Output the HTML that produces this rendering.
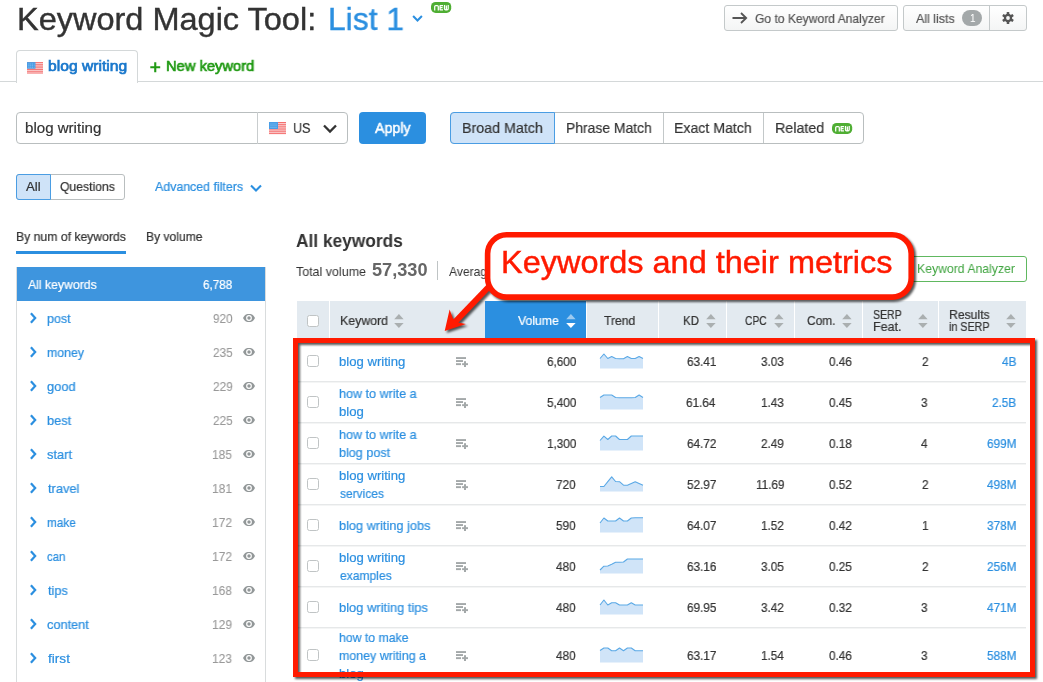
<!DOCTYPE html>
<html><head><meta charset="utf-8"><title>Keyword Magic Tool</title>
<style>
html,body{margin:0;padding:0;background:#fff;}
body{width:1043px;height:682px;position:relative;overflow:hidden;font-family:"Liberation Sans",sans-serif;}
.t{position:absolute;white-space:nowrap;line-height:1;transform-origin:0 50%;will-change:transform;}
.b{position:absolute;box-sizing:border-box;}
svg{position:absolute;overflow:visible;}
</style></head><body>
<span class="t" style="top:2.91px;font-size:32px;color:#333;-webkit-text-stroke:0.4px #333;left:16.50px;transform:scaleX(1.0153);">Keyword Magic Tool:</span>
<span class="t" style="top:2.91px;font-size:32px;color:#2b8fe0;-webkit-text-stroke:0.4px #2b8fe0;left:327.96px;transform:scaleX(0.9928);">List 1</span>
<svg style="left:412px;top:13px" width="12" height="10" viewBox="0 0 12 10"><path d="M1.1 3 L5.5 7.5 L9.9 3" fill="none" stroke="#2b8fe0" stroke-width="2"/></svg>
<svg style="left:431px;top:2px" width="21" height="11" viewBox="0 0 21 11"><rect x="0" y="0" width="20.2" height="10.9" rx="4.6" fill="#4fae33"/><g fill="none" stroke="#fff" stroke-width="1.25" stroke-linejoin="round" transform="translate(-0.4 0)"><path d="M4.1 8.4 V4.6 Q4.1 3.5 5.2 3.5 H6.6 Q7.7 3.5 7.7 4.6 V8.4"/><path d="M12.4 3.5 H9.5 V7.8 H12.4 M9.5 5.65 H12"/><path d="M13.9 2.9 V6.7 Q13.9 7.8 15 7.8 H16.5 Q17.6 7.8 17.6 6.7 V2.9 M15.75 3.5 V7.8"/></g></svg>
<div class="b" style="left:724px;top:5px;width:174px;height:26px;border:1px solid #c4c9ca;border-radius:3px;background:linear-gradient(#fff,#f4f5f5);"></div>
<svg style="left:732px;top:12px" width="16" height="12" viewBox="0 0 16 12"><path d="M0.5 6 H14 M9 1 L14.2 6 L9 11" fill="none" stroke="#555" stroke-width="1.8"/></svg>
<span class="t" style="top:11.50px;font-size:13px;color:#555;-webkit-text-stroke:0.2px #555;left:754.90px;transform:scaleX(0.9294);">Go to Keyword Analyzer</span>
<div class="b" style="left:903px;top:5px;width:124px;height:26px;border:1px solid #c4c9ca;border-radius:3px;background:linear-gradient(#fff,#f4f5f5);"></div>
<div class="b" style="left:989px;top:5px;width:1px;height:26px;background:#c4c9ca;"></div>
<span class="t" style="top:11.50px;font-size:13px;color:#555;-webkit-text-stroke:0.2px #555;left:915.70px;transform:scaleX(0.9565);">All lists</span>
<div class="b" style="left:962px;top:10px;width:20px;height:16px;background:#a3a8a9;border-radius:8px;"></div>
<span class="t" style="top:13.84px;font-size:10px;color:#fff;left:970.10px;">1</span>
<svg style="left:1002px;top:12px" width="12" height="12" viewBox="-6 -6 12 12"><g fill="#555"><rect x="-1.3" y="-6" width="2.6" height="12" rx=".6" transform="rotate(0)"/><rect x="-1.3" y="-6" width="2.6" height="12" rx=".6" transform="rotate(60)"/><rect x="-1.3" y="-6" width="2.6" height="12" rx=".6" transform="rotate(120)"/><circle r="4.2"/></g><circle r="1.9" fill="#f6f7f7"/></svg>
<div class="b" style="left:0px;top:81px;width:1043px;height:1px;background:#d4d8d9;"></div>
<div class="b" style="left:16px;top:50px;width:122px;height:33px;border:1px solid #d4d8d9;border-bottom:none;border-radius:4px 4px 0 0;background:#fff;"></div>
<svg style="left:27px;top:61.5px" width="16" height="11.5" viewBox="0 0 17 12"><rect width="17" height="12" fill="#fbdcdc"/><rect y="0.00" width="17" height="1" fill="#f46f6f"/><rect y="1.85" width="17" height="1" fill="#f46f6f"/><rect y="3.70" width="17" height="1" fill="#f46f6f"/><rect y="5.55" width="17" height="1" fill="#f46f6f"/><rect y="7.40" width="17" height="1" fill="#f46f6f"/><rect y="9.25" width="17" height="1" fill="#f46f6f"/><rect y="11.10" width="17" height="1" fill="#f46f6f"/><rect width="9" height="7" fill="#4a9ee6"/><path d="M1.5 2 H8 M1.5 3.8 H8 M1.5 5.5 H8" stroke="#9ccbf2" stroke-width="0.8" stroke-dasharray="1 1"/></svg>
<span class="t" style="top:58.10px;font-size:15px;color:#1a78cc;-webkit-text-stroke:0.7px #1a78cc;left:48.26px;transform:scaleX(1.0432);">blog writing</span>
<svg style="left:150px;top:62px" width="11" height="11" viewBox="0 0 11 11"><path d="M0.3 5.3 H10.2 M5.25 0.3 V10.2" stroke="#219a14" stroke-width="2.1" fill="none"/></svg>
<span class="t" style="top:58.10px;font-size:15px;color:#219a14;-webkit-text-stroke:0.7px #219a14;left:165.82px;transform:scaleX(0.9801);">New keyword</span>
<div class="b" style="left:16px;top:112px;width:332px;height:32px;border:1px solid #b9bebf;border-radius:4px;background:#fff;"></div>
<div class="b" style="left:257px;top:112px;width:1px;height:32px;background:#c9cdce;"></div>
<span class="t" style="top:120.30px;font-size:15px;color:#333;-webkit-text-stroke:0.2px #333;left:25.40px;transform:scaleX(1.0054);">blog writing</span>
<svg style="left:269px;top:122px" width="17" height="12" viewBox="0 0 17 12"><rect width="17" height="12" fill="#fbdcdc"/><rect y="0.00" width="17" height="1" fill="#f46f6f"/><rect y="1.85" width="17" height="1" fill="#f46f6f"/><rect y="3.70" width="17" height="1" fill="#f46f6f"/><rect y="5.55" width="17" height="1" fill="#f46f6f"/><rect y="7.40" width="17" height="1" fill="#f46f6f"/><rect y="9.25" width="17" height="1" fill="#f46f6f"/><rect y="11.10" width="17" height="1" fill="#f46f6f"/><rect width="9" height="7" fill="#4a9ee6"/><path d="M1.5 2 H8 M1.5 3.8 H8 M1.5 5.5 H8" stroke="#9ccbf2" stroke-width="0.8" stroke-dasharray="1 1"/></svg>
<span class="t" style="top:120.10px;font-size:15px;color:#333;-webkit-text-stroke:0.2px #333;left:292.92px;transform:scaleX(0.8385);">US</span>
<svg style="left:322px;top:123px" width="16" height="12" viewBox="0 0 16 12"><path d="M2 2.5 L8 8.5 L14 2.5" fill="none" stroke="#333" stroke-width="2.3"/></svg>
<div class="b" style="left:359.4px;top:112px;width:66.9px;height:32px;background:#2b8fe0;border-radius:4px;"></div>
<span class="t" style="top:120.30px;font-size:15px;color:#fff;-webkit-text-stroke:0.5px #fff;left:375.20px;transform:scaleX(0.9493);">Apply</span>
<div class="b" style="left:450px;top:112px;width:414px;height:32px;border:1px solid #b9bebf;border-radius:4px;background:#fff;"></div>
<div class="b" style="left:450px;top:112px;width:104.8px;height:32px;border:1px solid #4a9de3;border-radius:4px 0 0 4px;background:#cfe3f8;"></div>
<div class="b" style="left:663px;top:113px;width:1px;height:30px;background:#c3c8c9;"></div>
<div class="b" style="left:763px;top:113px;width:1px;height:30px;background:#c3c8c9;"></div>
<span class="t" style="top:120.30px;font-size:15px;color:#333;-webkit-text-stroke:0.2px #333;left:461.86px;transform:scaleX(0.9500);">Broad Match</span>
<span class="t" style="top:120.30px;font-size:15px;color:#333;-webkit-text-stroke:0.2px #333;left:565.89px;transform:scaleX(0.9265);">Phrase Match</span>
<span class="t" style="top:120.30px;font-size:15px;color:#333;-webkit-text-stroke:0.2px #333;left:674.37px;transform:scaleX(0.9410);">Exact Match</span>
<span class="t" style="top:120.30px;font-size:15px;color:#333;-webkit-text-stroke:0.2px #333;left:774.86px;transform:scaleX(0.9527);">Related</span>
<svg style="left:832px;top:123px" width="21" height="11" viewBox="0 0 21 11"><rect x="0" y="0" width="20.2" height="10.9" rx="4.6" fill="#4fae33"/><g fill="none" stroke="#fff" stroke-width="1.25" stroke-linejoin="round" transform="translate(-0.4 0)"><path d="M4.1 8.4 V4.6 Q4.1 3.5 5.2 3.5 H6.6 Q7.7 3.5 7.7 4.6 V8.4"/><path d="M12.4 3.5 H9.5 V7.8 H12.4 M9.5 5.65 H12"/><path d="M13.9 2.9 V6.7 Q13.9 7.8 15 7.8 H16.5 Q17.6 7.8 17.6 6.7 V2.9 M15.75 3.5 V7.8"/></g></svg>
<div class="b" style="left:16px;top:174px;width:109.2px;height:26px;border:1px solid #b9bebf;border-radius:3px;background:#fff;"></div>
<div class="b" style="left:16px;top:174px;width:35px;height:26px;border:1px solid #4a9de3;border-radius:3px 0 0 3px;background:#cfe3f8;"></div>
<span class="t" style="top:180.00px;font-size:13px;color:#333;-webkit-text-stroke:0.22px #333;left:26.10px;transform:scaleX(1.0110);">All</span>
<span class="t" style="top:180.00px;font-size:13px;color:#333;-webkit-text-stroke:0.22px #333;left:60.11px;transform:scaleX(0.9377);">Questions</span>
<span class="t" style="top:180.00px;font-size:13px;color:#2b8fe0;-webkit-text-stroke:0.22px #2b8fe0;left:154.80px;transform:scaleX(0.9518);">Advanced filters</span>
<svg style="left:249px;top:183px" width="14" height="10" viewBox="0 0 14 10"><path d="M2 2.5 L7 7.5 L12 2.5" fill="none" stroke="#2b8fe0" stroke-width="2.1"/></svg>
<span class="t" style="top:230.30px;font-size:13px;color:#333;-webkit-text-stroke:0.22px #333;left:16.02px;transform:scaleX(0.9388);">By num of keywords</span>
<span class="t" style="top:230.30px;font-size:13px;color:#333;-webkit-text-stroke:0.22px #333;left:146.03px;transform:scaleX(0.9298);">By volume</span>
<div class="b" style="left:16px;top:250.5px;width:110px;height:3.5px;background:#2b8fe0;"></div>
<div class="b" style="left:16px;top:267px;width:249.7px;height:420px;border:1px solid #d9dcdd;background:#fff;"></div>
<div class="b" style="left:17px;top:267px;width:248px;height:34px;background:#3e95de;"></div>
<span class="t" style="top:278.00px;font-size:13px;color:#fff;-webkit-text-stroke:0.22px #fff;left:27.80px;transform:scaleX(0.9415);">All keywords</span>
<span class="t" style="top:278.00px;font-size:13px;color:#fff;-webkit-text-stroke:0.22px #fff;left:203.42px;transform:scaleX(0.8996);">6,788</span>
<svg style="left:29.2px;top:311.7px" width="10" height="12" viewBox="0 0 10 12"><path d="M1.9 1.2 L6.2 6 L1.9 10.8" fill="none" stroke="#2b8fe0" stroke-width="2.2"/></svg>
<span class="t" style="top:311.65px;font-size:13px;color:#2b8fe0;-webkit-text-stroke:0.22px #2b8fe0;left:46.95px;transform:scaleX(0.9584);">post</span>
<span class="t" style="top:311.70px;font-size:13px;color:#999;-webkit-text-stroke:0.1px #999;left:212.83px;transform:scaleX(0.8999);">920</span>
<svg style="left:243px;top:314.2px" width="12" height="8" viewBox="0 0 12 8"><path d="M0 4 C2 0.3 4 0 6 0 C8 0 10 0.3 12 4 C10 7.7 8 8 6 8 C4 8 2 7.7 0 4 Z" fill="#929798"/><circle cx="6" cy="4" r="2.9" fill="#fff"/><circle cx="6" cy="4" r="1.7" fill="#929798"/></svg>
<svg style="left:29.2px;top:345.7px" width="10" height="12" viewBox="0 0 10 12"><path d="M1.9 1.2 L6.2 6 L1.9 10.8" fill="none" stroke="#2b8fe0" stroke-width="2.2"/></svg>
<span class="t" style="top:345.65px;font-size:13px;color:#2b8fe0;-webkit-text-stroke:0.22px #2b8fe0;left:46.96px;transform:scaleX(0.9498);">money</span>
<span class="t" style="top:345.70px;font-size:13px;color:#999;-webkit-text-stroke:0.1px #999;left:212.71px;transform:scaleX(0.9056);">235</span>
<svg style="left:243px;top:348.2px" width="12" height="8" viewBox="0 0 12 8"><path d="M0 4 C2 0.3 4 0 6 0 C8 0 10 0.3 12 4 C10 7.7 8 8 6 8 C4 8 2 7.7 0 4 Z" fill="#929798"/><circle cx="6" cy="4" r="2.9" fill="#fff"/><circle cx="6" cy="4" r="1.7" fill="#929798"/></svg>
<svg style="left:29.2px;top:379.7px" width="10" height="12" viewBox="0 0 10 12"><path d="M1.9 1.2 L6.2 6 L1.9 10.8" fill="none" stroke="#2b8fe0" stroke-width="2.2"/></svg>
<span class="t" style="top:379.65px;font-size:13px;color:#2b8fe0;-webkit-text-stroke:0.22px #2b8fe0;left:47.19px;transform:scaleX(0.9859);">good</span>
<span class="t" style="top:379.70px;font-size:13px;color:#999;-webkit-text-stroke:0.1px #999;left:212.71px;transform:scaleX(0.9113);">229</span>
<svg style="left:243px;top:382.2px" width="12" height="8" viewBox="0 0 12 8"><path d="M0 4 C2 0.3 4 0 6 0 C8 0 10 0.3 12 4 C10 7.7 8 8 6 8 C4 8 2 7.7 0 4 Z" fill="#929798"/><circle cx="6" cy="4" r="2.9" fill="#fff"/><circle cx="6" cy="4" r="1.7" fill="#929798"/></svg>
<svg style="left:29.2px;top:413.7px" width="10" height="12" viewBox="0 0 10 12"><path d="M1.9 1.2 L6.2 6 L1.9 10.8" fill="none" stroke="#2b8fe0" stroke-width="2.2"/></svg>
<span class="t" style="top:413.65px;font-size:13px;color:#2b8fe0;-webkit-text-stroke:0.22px #2b8fe0;left:46.94px;transform:scaleX(0.9794);">best</span>
<span class="t" style="top:413.70px;font-size:13px;color:#999;-webkit-text-stroke:0.1px #999;left:212.71px;transform:scaleX(0.9056);">225</span>
<svg style="left:243px;top:416.2px" width="12" height="8" viewBox="0 0 12 8"><path d="M0 4 C2 0.3 4 0 6 0 C8 0 10 0.3 12 4 C10 7.7 8 8 6 8 C4 8 2 7.7 0 4 Z" fill="#929798"/><circle cx="6" cy="4" r="2.9" fill="#fff"/><circle cx="6" cy="4" r="1.7" fill="#929798"/></svg>
<svg style="left:29.2px;top:447.7px" width="10" height="12" viewBox="0 0 10 12"><path d="M1.9 1.2 L6.2 6 L1.9 10.8" fill="none" stroke="#2b8fe0" stroke-width="2.2"/></svg>
<span class="t" style="top:447.65px;font-size:13px;color:#2b8fe0;-webkit-text-stroke:0.22px #2b8fe0;left:47.44px;transform:scaleX(0.9884);">start</span>
<span class="t" style="top:447.70px;font-size:13px;color:#999;-webkit-text-stroke:0.1px #999;left:212.47px;transform:scaleX(0.9172);">185</span>
<svg style="left:243px;top:450.2px" width="12" height="8" viewBox="0 0 12 8"><path d="M0 4 C2 0.3 4 0 6 0 C8 0 10 0.3 12 4 C10 7.7 8 8 6 8 C4 8 2 7.7 0 4 Z" fill="#929798"/><circle cx="6" cy="4" r="2.9" fill="#fff"/><circle cx="6" cy="4" r="1.7" fill="#929798"/></svg>
<svg style="left:29.2px;top:481.7px" width="10" height="12" viewBox="0 0 10 12"><path d="M1.9 1.2 L6.2 6 L1.9 10.8" fill="none" stroke="#2b8fe0" stroke-width="2.2"/></svg>
<span class="t" style="top:481.65px;font-size:13px;color:#2b8fe0;-webkit-text-stroke:0.22px #2b8fe0;left:47.57px;transform:scaleX(0.9834);">travel</span>
<span class="t" style="top:481.70px;font-size:13px;color:#999;-webkit-text-stroke:0.1px #999;left:212.46px;transform:scaleX(0.9231);">181</span>
<svg style="left:243px;top:484.2px" width="12" height="8" viewBox="0 0 12 8"><path d="M0 4 C2 0.3 4 0 6 0 C8 0 10 0.3 12 4 C10 7.7 8 8 6 8 C4 8 2 7.7 0 4 Z" fill="#929798"/><circle cx="6" cy="4" r="2.9" fill="#fff"/><circle cx="6" cy="4" r="1.7" fill="#929798"/></svg>
<svg style="left:29.2px;top:515.7px" width="10" height="12" viewBox="0 0 10 12"><path d="M1.9 1.2 L6.2 6 L1.9 10.8" fill="none" stroke="#2b8fe0" stroke-width="2.2"/></svg>
<span class="t" style="top:515.65px;font-size:13px;color:#2b8fe0;-webkit-text-stroke:0.22px #2b8fe0;left:46.99px;transform:scaleX(0.9100);">make</span>
<span class="t" style="top:515.70px;font-size:13px;color:#999;-webkit-text-stroke:0.1px #999;left:212.46px;transform:scaleX(0.9231);">172</span>
<svg style="left:243px;top:518.2px" width="12" height="8" viewBox="0 0 12 8"><path d="M0 4 C2 0.3 4 0 6 0 C8 0 10 0.3 12 4 C10 7.7 8 8 6 8 C4 8 2 7.7 0 4 Z" fill="#929798"/><circle cx="6" cy="4" r="2.9" fill="#fff"/><circle cx="6" cy="4" r="1.7" fill="#929798"/></svg>
<svg style="left:29.2px;top:549.7px" width="10" height="12" viewBox="0 0 10 12"><path d="M1.9 1.2 L6.2 6 L1.9 10.8" fill="none" stroke="#2b8fe0" stroke-width="2.2"/></svg>
<span class="t" style="top:549.65px;font-size:13px;color:#2b8fe0;-webkit-text-stroke:0.22px #2b8fe0;left:47.24px;transform:scaleX(0.8755);">can</span>
<span class="t" style="top:549.70px;font-size:13px;color:#999;-webkit-text-stroke:0.1px #999;left:212.46px;transform:scaleX(0.9231);">172</span>
<svg style="left:243px;top:552.2px" width="12" height="8" viewBox="0 0 12 8"><path d="M0 4 C2 0.3 4 0 6 0 C8 0 10 0.3 12 4 C10 7.7 8 8 6 8 C4 8 2 7.7 0 4 Z" fill="#929798"/><circle cx="6" cy="4" r="2.9" fill="#fff"/><circle cx="6" cy="4" r="1.7" fill="#929798"/></svg>
<svg style="left:29.2px;top:583.7px" width="10" height="12" viewBox="0 0 10 12"><path d="M1.9 1.2 L6.2 6 L1.9 10.8" fill="none" stroke="#2b8fe0" stroke-width="2.2"/></svg>
<span class="t" style="top:583.65px;font-size:13px;color:#2b8fe0;-webkit-text-stroke:0.22px #2b8fe0;left:47.57px;transform:scaleX(0.9767);">tips</span>
<span class="t" style="top:583.70px;font-size:13px;color:#999;-webkit-text-stroke:0.1px #999;left:212.47px;transform:scaleX(0.9172);">168</span>
<svg style="left:243px;top:586.2px" width="12" height="8" viewBox="0 0 12 8"><path d="M0 4 C2 0.3 4 0 6 0 C8 0 10 0.3 12 4 C10 7.7 8 8 6 8 C4 8 2 7.7 0 4 Z" fill="#929798"/><circle cx="6" cy="4" r="2.9" fill="#fff"/><circle cx="6" cy="4" r="1.7" fill="#929798"/></svg>
<svg style="left:29.2px;top:617.7px" width="10" height="12" viewBox="0 0 10 12"><path d="M1.9 1.2 L6.2 6 L1.9 10.8" fill="none" stroke="#2b8fe0" stroke-width="2.2"/></svg>
<span class="t" style="top:617.65px;font-size:13px;color:#2b8fe0;-webkit-text-stroke:0.22px #2b8fe0;left:47.19px;transform:scaleX(0.9805);">content</span>
<span class="t" style="top:617.70px;font-size:13px;color:#999;-webkit-text-stroke:0.1px #999;left:212.46px;transform:scaleX(0.9231);">129</span>
<svg style="left:243px;top:620.2px" width="12" height="8" viewBox="0 0 12 8"><path d="M0 4 C2 0.3 4 0 6 0 C8 0 10 0.3 12 4 C10 7.7 8 8 6 8 C4 8 2 7.7 0 4 Z" fill="#929798"/><circle cx="6" cy="4" r="2.9" fill="#fff"/><circle cx="6" cy="4" r="1.7" fill="#929798"/></svg>
<svg style="left:29.2px;top:651.7px" width="10" height="12" viewBox="0 0 10 12"><path d="M1.9 1.2 L6.2 6 L1.9 10.8" fill="none" stroke="#2b8fe0" stroke-width="2.2"/></svg>
<span class="t" style="top:651.65px;font-size:13px;color:#2b8fe0;-webkit-text-stroke:0.22px #2b8fe0;left:47.56px;transform:scaleX(1.0481);">first</span>
<span class="t" style="top:651.70px;font-size:13px;color:#999;-webkit-text-stroke:0.1px #999;left:212.47px;transform:scaleX(0.9172);">123</span>
<svg style="left:243px;top:654.2px" width="12" height="8" viewBox="0 0 12 8"><path d="M0 4 C2 0.3 4 0 6 0 C8 0 10 0.3 12 4 C10 7.7 8 8 6 8 C4 8 2 7.7 0 4 Z" fill="#929798"/><circle cx="6" cy="4" r="2.9" fill="#fff"/><circle cx="6" cy="4" r="1.7" fill="#929798"/></svg>
<span class="t" style="top:231.76px;font-size:18px;color:#333;font-weight:bold;left:296.15px;transform:scaleX(0.9620);">All keywords</span>
<span class="t" style="top:265.00px;font-size:13px;color:#333;left:296.25px;transform:scaleX(0.9588);">Total volume</span>
<span class="t" style="top:261.06px;font-size:18px;color:#666;font-weight:bold;left:371.96px;transform:scaleX(1.0089);">57,330</span>
<div class="b" style="left:437px;top:261px;width:1px;height:19px;background:#bfc4c5;"></div>
<span class="t" style="top:265.00px;font-size:13px;color:#333;left:448.50px;transform:scaleX(0.9285);">Average</span>
<div class="b" style="left:880px;top:256px;width:147px;height:26px;border:1px solid #60b860;border-radius:3px;background:#fff;"></div>
<span class="t" style="top:262.00px;font-size:13px;color:#3fa43f;left:916.52px;transform:scaleX(0.9414);">Keyword Analyzer</span>
<div class="b" style="left:297px;top:301px;width:729px;height:38px;background:#e3eaf0;"></div>
<div class="b" style="left:485px;top:301px;width:101.5px;height:38px;background:#2b8fe0;"></div>
<div class="b" style="left:329px;top:301px;width:1px;height:38px;background:#fff;"></div>
<div class="b" style="left:586px;top:301px;width:1px;height:38px;background:#fff;"></div>
<div class="b" style="left:658px;top:301px;width:1px;height:38px;background:#fff;"></div>
<div class="b" style="left:726px;top:301px;width:1px;height:38px;background:#fff;"></div>
<div class="b" style="left:794px;top:301px;width:1px;height:38px;background:#fff;"></div>
<div class="b" style="left:862px;top:301px;width:1px;height:38px;background:#fff;"></div>
<div class="b" style="left:938px;top:301px;width:1px;height:38px;background:#fff;"></div>
<div class="b" style="left:307px;top:315px;width:12px;height:12px;border:1px solid #c0c4c5;border-radius:2.5px;background:#fff;"></div>
<span class="t" style="top:314.00px;font-size:13px;color:#333;-webkit-text-stroke:0.22px #333;left:339.51px;transform:scaleX(0.9497);">Keyword</span>
<svg style="left:394px;top:314px" width="10" height="14" viewBox="0 0 10 14"><path d="M0.2 5.2 L4.9 0 L9.6 5.2 Z" fill="#aaafb0"/><path d="M0.2 8.9 L4.9 14.1 L9.6 8.9 Z" fill="#aaafb0"/></svg>
<span class="t" style="top:314.00px;font-size:13px;color:#fff;-webkit-text-stroke:0.22px #fff;left:517.70px;transform:scaleX(0.9394);">Volume</span>
<svg style="left:566px;top:314px" width="10" height="14" viewBox="0 0 10 14"><path d="M0.2 5.2 L4.9 0 L9.6 5.2 Z" fill="#9ccaf0"/><path d="M0.2 8.9 L4.9 14.1 L9.6 8.9 Z" fill="#fff"/></svg>
<span class="t" style="top:314.00px;font-size:13px;color:#333;-webkit-text-stroke:0.22px #333;left:604.26px;transform:scaleX(0.9323);">Trend</span>
<span class="t" style="top:314.00px;font-size:13px;color:#333;-webkit-text-stroke:0.22px #333;left:682.78px;transform:scaleX(0.8843);">KD</span>
<svg style="left:706px;top:314px" width="10" height="14" viewBox="0 0 10 14"><path d="M0.2 5.2 L4.9 0 L9.6 5.2 Z" fill="#aaafb0"/><path d="M0.2 8.9 L4.9 14.1 L9.6 8.9 Z" fill="#aaafb0"/></svg>
<span class="t" style="top:314.00px;font-size:13px;color:#333;-webkit-text-stroke:0.22px #333;left:745.39px;transform:scaleX(0.7882);">CPC</span>
<svg style="left:774px;top:314px" width="10" height="14" viewBox="0 0 10 14"><path d="M0.2 5.2 L4.9 0 L9.6 5.2 Z" fill="#aaafb0"/><path d="M0.2 8.9 L4.9 14.1 L9.6 8.9 Z" fill="#aaafb0"/></svg>
<span class="t" style="top:314.00px;font-size:13px;color:#333;-webkit-text-stroke:0.22px #333;left:807.40px;transform:scaleX(0.9162);">Com.</span>
<svg style="left:842px;top:314px" width="10" height="14" viewBox="0 0 10 14"><path d="M0.2 5.2 L4.9 0 L9.6 5.2 Z" fill="#aaafb0"/><path d="M0.2 8.9 L4.9 14.1 L9.6 8.9 Z" fill="#aaafb0"/></svg>
<span class="t" style="top:307.80px;font-size:13px;color:#333;-webkit-text-stroke:0.22px #333;left:873.08px;transform:scaleX(0.8100);">SERP</span>
<span class="t" style="top:319.80px;font-size:13px;color:#333;-webkit-text-stroke:0.22px #333;left:872.80px;transform:scaleX(0.9588);">Feat.</span>
<svg style="left:917.5px;top:314px" width="10" height="14" viewBox="0 0 10 14"><path d="M0.2 5.2 L4.9 0 L9.6 5.2 Z" fill="#aaafb0"/><path d="M0.2 8.9 L4.9 14.1 L9.6 8.9 Z" fill="#aaafb0"/></svg>
<span class="t" style="top:307.80px;font-size:13px;color:#333;-webkit-text-stroke:0.22px #333;left:948.52px;transform:scaleX(0.9388);">Results</span>
<span class="t" style="top:319.80px;font-size:13px;color:#333;-webkit-text-stroke:0.22px #333;left:948.86px;transform:scaleX(0.8237);">in SERP</span>
<svg style="left:1005.5px;top:314px" width="10" height="14" viewBox="0 0 10 14"><path d="M0.2 5.2 L4.9 0 L9.6 5.2 Z" fill="#aaafb0"/><path d="M0.2 8.9 L4.9 14.1 L9.6 8.9 Z" fill="#aaafb0"/></svg>
<div class="b" style="left:307px;top:355.4px;width:12px;height:12px;border:1px solid #c0c4c5;border-radius:2.5px;background:#fff;"></div>
<span class="t" style="top:354.60px;font-size:13px;color:#2b8fe0;-webkit-text-stroke:0.2px #2b8fe0;left:339.31px;transform:scaleX(1.0090);">blog writing</span>
<svg style="left:456px;top:357px" width="12" height="10" viewBox="0 0 12 10"><g fill="#a3a8a9"><rect x="0" y="0.1" width="10" height="1.9"/><rect x="0" y="3.1" width="7" height="1.9"/><rect x="0" y="6.2" width="5" height="1.9"/><rect x="6.1" y="6.2" width="5.9" height="1.9"/><rect x="8" y="4.2" width="2" height="5.8"/></g></svg>
<span class="t" style="top:354.60px;font-size:13px;color:#333;-webkit-text-stroke:0.22px #333;left:546.54px;transform:scaleX(0.9050);">6,600</span>
<span class="t" style="top:354.60px;font-size:13px;color:#333;-webkit-text-stroke:0.22px #333;left:686.66px;transform:scaleX(0.9050);">63.41</span>
<span class="t" style="top:354.60px;font-size:13px;color:#333;-webkit-text-stroke:0.22px #333;left:761.13px;transform:scaleX(0.9050);">3.03</span>
<span class="t" style="top:354.60px;font-size:13px;color:#333;-webkit-text-stroke:0.22px #333;left:829.13px;transform:scaleX(0.9050);">0.46</span>
<span class="t" style="top:354.60px;font-size:13px;color:#333;-webkit-text-stroke:0.22px #333;left:921.60px;transform:scaleX(0.9050);">2</span>
<span class="t" style="top:354.60px;font-size:13px;color:#2b8fe0;-webkit-text-stroke:0.22px #2b8fe0;left:1001.92px;transform:scaleX(0.9050);">4B</span>
<svg style="left:0;top:0" width="1043" height="682"><polygon points="600.0,358.5 603.9,354.0 607.8,358.5 611.7,356.5 615.6,358.5 619.5,358.7 623.5,358.7 627.4,356.5 631.3,358.5 635.2,358.5 639.1,356.5 643.0,358.5 643.0,368.5 600.0,368.5" fill="#d0e4f8"/><polyline points="600.0,358.5 603.9,354.0 607.8,358.5 611.7,356.5 615.6,358.5 619.5,358.7 623.5,358.7 627.4,356.5 631.3,358.5 635.2,358.5 639.1,356.5 643.0,358.5" fill="none" stroke="#5ba9e6" stroke-width="1.1" stroke-linejoin="round"/></svg>
<div class="b" style="left:297px;top:381.0px;width:729px;height:1px;background:#e6e8e9;"></div>
<div class="b" style="left:297px;top:382.0px;width:729px;height:1px;background:#f4f5f5;"></div>
<div class="b" style="left:307px;top:396.4px;width:12px;height:12px;border:1px solid #c0c4c5;border-radius:2.5px;background:#fff;"></div>
<span class="t" style="top:386.60px;font-size:13px;color:#2b8fe0;-webkit-text-stroke:0.2px #2b8fe0;left:339.35px;transform:scaleX(0.9669);">how to write a</span>
<span class="t" style="top:404.60px;font-size:13px;color:#2b8fe0;-webkit-text-stroke:0.2px #2b8fe0;left:339.31px;transform:scaleX(1.0126);">blog</span>
<svg style="left:456px;top:398px" width="12" height="10" viewBox="0 0 12 10"><g fill="#a3a8a9"><rect x="0" y="0.1" width="10" height="1.9"/><rect x="0" y="3.1" width="7" height="1.9"/><rect x="0" y="6.2" width="5" height="1.9"/><rect x="6.1" y="6.2" width="5.9" height="1.9"/><rect x="8" y="4.2" width="2" height="5.8"/></g></svg>
<span class="t" style="top:395.60px;font-size:13px;color:#333;-webkit-text-stroke:0.22px #333;left:546.54px;transform:scaleX(0.9050);">5,400</span>
<span class="t" style="top:395.60px;font-size:13px;color:#333;-webkit-text-stroke:0.22px #333;left:686.42px;transform:scaleX(0.9050);">61.64</span>
<span class="t" style="top:395.60px;font-size:13px;color:#333;-webkit-text-stroke:0.22px #333;left:761.13px;transform:scaleX(0.9050);">1.43</span>
<span class="t" style="top:395.60px;font-size:13px;color:#333;-webkit-text-stroke:0.22px #333;left:829.13px;transform:scaleX(0.9050);">0.45</span>
<span class="t" style="top:395.60px;font-size:13px;color:#333;-webkit-text-stroke:0.22px #333;left:921.48px;transform:scaleX(0.9050);">3</span>
<span class="t" style="top:395.60px;font-size:13px;color:#2b8fe0;-webkit-text-stroke:0.22px #2b8fe0;left:992.15px;transform:scaleX(0.9050);">2.5B</span>
<svg style="left:0;top:0" width="1043" height="682"><polygon points="600.0,397.5 603.9,395.0 607.8,395.0 611.7,395.0 615.6,397.5 619.5,397.7 623.5,397.7 627.4,397.7 631.3,397.7 635.2,397.5 639.1,395.0 643.0,397.5 643.0,409.5 600.0,409.5" fill="#d0e4f8"/><polyline points="600.0,397.5 603.9,395.0 607.8,395.0 611.7,395.0 615.6,397.5 619.5,397.7 623.5,397.7 627.4,397.7 631.3,397.7 635.2,397.5 639.1,395.0 643.0,397.5" fill="none" stroke="#5ba9e6" stroke-width="1.1" stroke-linejoin="round"/></svg>
<div class="b" style="left:297px;top:422.0px;width:729px;height:1px;background:#e6e8e9;"></div>
<div class="b" style="left:297px;top:423.0px;width:729px;height:1px;background:#f4f5f5;"></div>
<div class="b" style="left:307px;top:437.4px;width:12px;height:12px;border:1px solid #c0c4c5;border-radius:2.5px;background:#fff;"></div>
<span class="t" style="top:427.60px;font-size:13px;color:#2b8fe0;-webkit-text-stroke:0.2px #2b8fe0;left:339.35px;transform:scaleX(0.9669);">how to write a</span>
<span class="t" style="top:445.60px;font-size:13px;color:#2b8fe0;-webkit-text-stroke:0.2px #2b8fe0;left:339.35px;transform:scaleX(0.9673);">blog post</span>
<svg style="left:456px;top:439px" width="12" height="10" viewBox="0 0 12 10"><g fill="#a3a8a9"><rect x="0" y="0.1" width="10" height="1.9"/><rect x="0" y="3.1" width="7" height="1.9"/><rect x="0" y="6.2" width="5" height="1.9"/><rect x="6.1" y="6.2" width="5.9" height="1.9"/><rect x="8" y="4.2" width="2" height="5.8"/></g></svg>
<span class="t" style="top:436.60px;font-size:13px;color:#333;-webkit-text-stroke:0.22px #333;left:546.54px;transform:scaleX(0.9050);">1,300</span>
<span class="t" style="top:436.60px;font-size:13px;color:#333;-webkit-text-stroke:0.22px #333;left:686.66px;transform:scaleX(0.9050);">64.72</span>
<span class="t" style="top:436.60px;font-size:13px;color:#333;-webkit-text-stroke:0.22px #333;left:761.25px;transform:scaleX(0.9050);">2.49</span>
<span class="t" style="top:436.60px;font-size:13px;color:#333;-webkit-text-stroke:0.22px #333;left:829.13px;transform:scaleX(0.9050);">0.18</span>
<span class="t" style="top:436.60px;font-size:13px;color:#333;-webkit-text-stroke:0.22px #333;left:921.36px;transform:scaleX(0.9050);">4</span>
<span class="t" style="top:436.60px;font-size:13px;color:#2b8fe0;-webkit-text-stroke:0.22px #2b8fe0;left:987.21px;transform:scaleX(0.9050);">699M</span>
<svg style="left:0;top:0" width="1043" height="682"><polygon points="600.0,440.5 603.9,436.2 607.8,439.5 611.7,436.0 615.6,436.0 619.5,439.5 623.5,439.5 627.4,439.5 631.3,436.0 635.2,436.0 639.1,436.0 643.0,436.0 643.0,450.5 600.0,450.5" fill="#d0e4f8"/><polyline points="600.0,440.5 603.9,436.2 607.8,439.5 611.7,436.0 615.6,436.0 619.5,439.5 623.5,439.5 627.4,439.5 631.3,436.0 635.2,436.0 639.1,436.0 643.0,436.0" fill="none" stroke="#5ba9e6" stroke-width="1.1" stroke-linejoin="round"/></svg>
<div class="b" style="left:297px;top:463.0px;width:729px;height:1px;background:#e6e8e9;"></div>
<div class="b" style="left:297px;top:464.0px;width:729px;height:1px;background:#f4f5f5;"></div>
<div class="b" style="left:307px;top:478.4px;width:12px;height:12px;border:1px solid #c0c4c5;border-radius:2.5px;background:#fff;"></div>
<span class="t" style="top:468.60px;font-size:13px;color:#2b8fe0;-webkit-text-stroke:0.2px #2b8fe0;left:339.31px;transform:scaleX(1.0090);">blog writing</span>
<span class="t" style="top:486.60px;font-size:13px;color:#2b8fe0;-webkit-text-stroke:0.2px #2b8fe0;left:339.86px;transform:scaleX(0.9201);">services</span>
<svg style="left:456px;top:480px" width="12" height="10" viewBox="0 0 12 10"><g fill="#a3a8a9"><rect x="0" y="0.1" width="10" height="1.9"/><rect x="0" y="3.1" width="7" height="1.9"/><rect x="0" y="6.2" width="5" height="1.9"/><rect x="6.1" y="6.2" width="5.9" height="1.9"/><rect x="8" y="4.2" width="2" height="5.8"/></g></svg>
<span class="t" style="top:477.60px;font-size:13px;color:#333;-webkit-text-stroke:0.22px #333;left:556.42px;transform:scaleX(0.9050);">720</span>
<span class="t" style="top:477.60px;font-size:13px;color:#333;-webkit-text-stroke:0.22px #333;left:686.66px;transform:scaleX(0.9050);">52.97</span>
<span class="t" style="top:477.60px;font-size:13px;color:#333;-webkit-text-stroke:0.22px #333;left:755.60px;transform:scaleX(0.9050);">11.69</span>
<span class="t" style="top:477.60px;font-size:13px;color:#333;-webkit-text-stroke:0.22px #333;left:829.25px;transform:scaleX(0.9050);">0.52</span>
<span class="t" style="top:477.60px;font-size:13px;color:#333;-webkit-text-stroke:0.22px #333;left:921.60px;transform:scaleX(0.9050);">2</span>
<span class="t" style="top:477.60px;font-size:13px;color:#2b8fe0;-webkit-text-stroke:0.22px #2b8fe0;left:987.21px;transform:scaleX(0.9050);">498M</span>
<svg style="left:0;top:0" width="1043" height="682"><polygon points="600.0,486.5 603.9,486.5 607.8,481.7 611.7,476.8 615.6,481.5 619.5,481.7 623.5,485.2 627.4,485.2 631.3,483.5 635.2,481.7 639.1,483.5 643.0,485.2 643.0,491.5 600.0,491.5" fill="#d0e4f8"/><polyline points="600.0,486.5 603.9,486.5 607.8,481.7 611.7,476.8 615.6,481.5 619.5,481.7 623.5,485.2 627.4,485.2 631.3,483.5 635.2,481.7 639.1,483.5 643.0,485.2" fill="none" stroke="#5ba9e6" stroke-width="1.1" stroke-linejoin="round"/></svg>
<div class="b" style="left:297px;top:504.0px;width:729px;height:1px;background:#e6e8e9;"></div>
<div class="b" style="left:297px;top:505.0px;width:729px;height:1px;background:#f4f5f5;"></div>
<div class="b" style="left:307px;top:519.4px;width:12px;height:12px;border:1px solid #c0c4c5;border-radius:2.5px;background:#fff;"></div>
<span class="t" style="top:518.60px;font-size:13px;color:#2b8fe0;-webkit-text-stroke:0.2px #2b8fe0;left:339.33px;transform:scaleX(0.9811);">blog writing jobs</span>
<svg style="left:456px;top:521px" width="12" height="10" viewBox="0 0 12 10"><g fill="#a3a8a9"><rect x="0" y="0.1" width="10" height="1.9"/><rect x="0" y="3.1" width="7" height="1.9"/><rect x="0" y="6.2" width="5" height="1.9"/><rect x="6.1" y="6.2" width="5.9" height="1.9"/><rect x="8" y="4.2" width="2" height="5.8"/></g></svg>
<span class="t" style="top:518.60px;font-size:13px;color:#333;-webkit-text-stroke:0.22px #333;left:556.42px;transform:scaleX(0.9050);">590</span>
<span class="t" style="top:518.60px;font-size:13px;color:#333;-webkit-text-stroke:0.22px #333;left:686.66px;transform:scaleX(0.9050);">64.07</span>
<span class="t" style="top:518.60px;font-size:13px;color:#333;-webkit-text-stroke:0.22px #333;left:761.25px;transform:scaleX(0.9050);">1.52</span>
<span class="t" style="top:518.60px;font-size:13px;color:#333;-webkit-text-stroke:0.22px #333;left:829.25px;transform:scaleX(0.9050);">0.42</span>
<span class="t" style="top:518.60px;font-size:13px;color:#333;-webkit-text-stroke:0.22px #333;left:921.60px;transform:scaleX(0.9050);">1</span>
<span class="t" style="top:518.60px;font-size:13px;color:#2b8fe0;-webkit-text-stroke:0.22px #2b8fe0;left:987.21px;transform:scaleX(0.9050);">378M</span>
<svg style="left:0;top:0" width="1043" height="682"><polygon points="600.0,523.0 603.9,518.0 607.8,521.0 611.7,521.0 615.6,521.0 619.5,518.0 623.5,521.0 627.4,521.0 631.3,518.0 635.2,517.8 639.1,517.8 643.0,517.8 643.0,532.5 600.0,532.5" fill="#d0e4f8"/><polyline points="600.0,523.0 603.9,518.0 607.8,521.0 611.7,521.0 615.6,521.0 619.5,518.0 623.5,521.0 627.4,521.0 631.3,518.0 635.2,517.8 639.1,517.8 643.0,517.8" fill="none" stroke="#5ba9e6" stroke-width="1.1" stroke-linejoin="round"/></svg>
<div class="b" style="left:297px;top:545.0px;width:729px;height:1px;background:#e6e8e9;"></div>
<div class="b" style="left:297px;top:546.0px;width:729px;height:1px;background:#f4f5f5;"></div>
<div class="b" style="left:307px;top:560.4px;width:12px;height:12px;border:1px solid #c0c4c5;border-radius:2.5px;background:#fff;"></div>
<span class="t" style="top:550.60px;font-size:13px;color:#2b8fe0;-webkit-text-stroke:0.2px #2b8fe0;left:339.31px;transform:scaleX(1.0090);">blog writing</span>
<span class="t" style="top:568.60px;font-size:13px;color:#2b8fe0;-webkit-text-stroke:0.2px #2b8fe0;left:339.62px;transform:scaleX(0.9282);">examples</span>
<svg style="left:456px;top:562px" width="12" height="10" viewBox="0 0 12 10"><g fill="#a3a8a9"><rect x="0" y="0.1" width="10" height="1.9"/><rect x="0" y="3.1" width="7" height="1.9"/><rect x="0" y="6.2" width="5" height="1.9"/><rect x="6.1" y="6.2" width="5.9" height="1.9"/><rect x="8" y="4.2" width="2" height="5.8"/></g></svg>
<span class="t" style="top:559.60px;font-size:13px;color:#333;-webkit-text-stroke:0.22px #333;left:556.42px;transform:scaleX(0.9050);">480</span>
<span class="t" style="top:559.60px;font-size:13px;color:#333;-webkit-text-stroke:0.22px #333;left:686.54px;transform:scaleX(0.9050);">63.16</span>
<span class="t" style="top:559.60px;font-size:13px;color:#333;-webkit-text-stroke:0.22px #333;left:761.13px;transform:scaleX(0.9050);">3.05</span>
<span class="t" style="top:559.60px;font-size:13px;color:#333;-webkit-text-stroke:0.22px #333;left:829.13px;transform:scaleX(0.9050);">0.25</span>
<span class="t" style="top:559.60px;font-size:13px;color:#333;-webkit-text-stroke:0.22px #333;left:921.60px;transform:scaleX(0.9050);">2</span>
<span class="t" style="top:559.60px;font-size:13px;color:#2b8fe0;-webkit-text-stroke:0.22px #2b8fe0;left:987.21px;transform:scaleX(0.9050);">256M</span>
<svg style="left:0;top:0" width="1043" height="682"><polygon points="600.0,570.0 603.9,566.2 607.8,566.0 611.7,564.2 615.6,562.2 619.5,562.2 623.5,562.0 627.4,559.0 631.3,559.0 635.2,559.0 639.1,559.0 643.0,559.0 643.0,573.5 600.0,573.5" fill="#d0e4f8"/><polyline points="600.0,570.0 603.9,566.2 607.8,566.0 611.7,564.2 615.6,562.2 619.5,562.2 623.5,562.0 627.4,559.0 631.3,559.0 635.2,559.0 639.1,559.0 643.0,559.0" fill="none" stroke="#5ba9e6" stroke-width="1.1" stroke-linejoin="round"/></svg>
<div class="b" style="left:297px;top:586.0px;width:729px;height:1px;background:#e6e8e9;"></div>
<div class="b" style="left:297px;top:587.0px;width:729px;height:1px;background:#f4f5f5;"></div>
<div class="b" style="left:307px;top:601.4px;width:12px;height:12px;border:1px solid #c0c4c5;border-radius:2.5px;background:#fff;"></div>
<span class="t" style="top:600.60px;font-size:13px;color:#2b8fe0;-webkit-text-stroke:0.2px #2b8fe0;left:339.33px;transform:scaleX(0.9932);">blog writing tips</span>
<svg style="left:456px;top:603px" width="12" height="10" viewBox="0 0 12 10"><g fill="#a3a8a9"><rect x="0" y="0.1" width="10" height="1.9"/><rect x="0" y="3.1" width="7" height="1.9"/><rect x="0" y="6.2" width="5" height="1.9"/><rect x="6.1" y="6.2" width="5.9" height="1.9"/><rect x="8" y="4.2" width="2" height="5.8"/></g></svg>
<span class="t" style="top:600.60px;font-size:13px;color:#333;-webkit-text-stroke:0.22px #333;left:556.42px;transform:scaleX(0.9050);">480</span>
<span class="t" style="top:600.60px;font-size:13px;color:#333;-webkit-text-stroke:0.22px #333;left:686.54px;transform:scaleX(0.9050);">69.95</span>
<span class="t" style="top:600.60px;font-size:13px;color:#333;-webkit-text-stroke:0.22px #333;left:761.25px;transform:scaleX(0.9050);">3.42</span>
<span class="t" style="top:600.60px;font-size:13px;color:#333;-webkit-text-stroke:0.22px #333;left:829.25px;transform:scaleX(0.9050);">0.32</span>
<span class="t" style="top:600.60px;font-size:13px;color:#333;-webkit-text-stroke:0.22px #333;left:921.48px;transform:scaleX(0.9050);">3</span>
<span class="t" style="top:600.60px;font-size:13px;color:#2b8fe0;-webkit-text-stroke:0.22px #2b8fe0;left:987.21px;transform:scaleX(0.9050);">471M</span>
<svg style="left:0;top:0" width="1043" height="682"><polygon points="600.0,605.0 603.9,600.0 607.8,605.0 611.7,602.7 615.6,602.7 619.5,605.0 623.5,605.0 627.4,605.0 631.3,602.7 635.2,605.0 639.1,605.0 643.0,605.0 643.0,614.5 600.0,614.5" fill="#d0e4f8"/><polyline points="600.0,605.0 603.9,600.0 607.8,605.0 611.7,602.7 615.6,602.7 619.5,605.0 623.5,605.0 627.4,605.0 631.3,602.7 635.2,605.0 639.1,605.0 643.0,605.0" fill="none" stroke="#5ba9e6" stroke-width="1.1" stroke-linejoin="round"/></svg>
<div class="b" style="left:297px;top:627.0px;width:729px;height:1px;background:#e6e8e9;"></div>
<div class="b" style="left:297px;top:628.0px;width:729px;height:1px;background:#f4f5f5;"></div>
<div class="b" style="left:307px;top:649.4px;width:12px;height:12px;border:1px solid #c0c4c5;border-radius:2.5px;background:#fff;"></div>
<span class="t" style="top:630.60px;font-size:13px;color:#2b8fe0;-webkit-text-stroke:0.2px #2b8fe0;left:339.36px;transform:scaleX(0.9432);">how to make</span>
<span class="t" style="top:648.60px;font-size:13px;color:#2b8fe0;-webkit-text-stroke:0.2px #2b8fe0;left:339.35px;transform:scaleX(0.9552);">money writing a</span>
<span class="t" style="top:666.60px;font-size:13px;color:#2b8fe0;-webkit-text-stroke:0.2px #2b8fe0;left:339.31px;transform:scaleX(1.0126);">blog</span>
<svg style="left:456px;top:651px" width="12" height="10" viewBox="0 0 12 10"><g fill="#a3a8a9"><rect x="0" y="0.1" width="10" height="1.9"/><rect x="0" y="3.1" width="7" height="1.9"/><rect x="0" y="6.2" width="5" height="1.9"/><rect x="6.1" y="6.2" width="5.9" height="1.9"/><rect x="8" y="4.2" width="2" height="5.8"/></g></svg>
<span class="t" style="top:648.60px;font-size:13px;color:#333;-webkit-text-stroke:0.22px #333;left:556.42px;transform:scaleX(0.9050);">480</span>
<span class="t" style="top:648.60px;font-size:13px;color:#333;-webkit-text-stroke:0.22px #333;left:686.66px;transform:scaleX(0.9050);">63.17</span>
<span class="t" style="top:648.60px;font-size:13px;color:#333;-webkit-text-stroke:0.22px #333;left:761.01px;transform:scaleX(0.9050);">1.54</span>
<span class="t" style="top:648.60px;font-size:13px;color:#333;-webkit-text-stroke:0.22px #333;left:829.13px;transform:scaleX(0.9050);">0.46</span>
<span class="t" style="top:648.60px;font-size:13px;color:#333;-webkit-text-stroke:0.22px #333;left:921.48px;transform:scaleX(0.9050);">3</span>
<span class="t" style="top:648.60px;font-size:13px;color:#2b8fe0;-webkit-text-stroke:0.22px #2b8fe0;left:987.21px;transform:scaleX(0.9050);">588M</span>
<svg style="left:0;top:0" width="1043" height="682"><polygon points="600.0,650.5 603.9,648.0 607.8,648.0 611.7,650.7 615.6,650.7 619.5,648.0 623.5,650.7 627.4,648.0 631.3,648.0 635.2,650.7 639.1,650.7 643.0,650.7 643.0,662.5 600.0,662.5" fill="#d0e4f8"/><polyline points="600.0,650.5 603.9,648.0 607.8,648.0 611.7,650.7 615.6,650.7 619.5,648.0 623.5,650.7 627.4,648.0 631.3,648.0 635.2,650.7 639.1,650.7 643.0,650.7" fill="none" stroke="#5ba9e6" stroke-width="1.1" stroke-linejoin="round"/></svg>
<div class="b" style="left:293px;top:338px;width:742px;height:339px;border:5px solid #ff1a00;filter:drop-shadow(2.9px 2.9px 0.9px rgba(0,0,0,.66));"></div>
<svg style="left:0;top:0;filter:drop-shadow(2.9px 2.9px 0.9px rgba(0,0,0,.66));" width="1043" height="682"><path d="M489.5 286 L454 323" stroke="#ff1a00" stroke-width="6" fill="none"/><path d="M444.7 331 L449.6 309.4 L453 318.6 L458.2 322.6 L466 324.1 Z" fill="#ff1a00"/><rect x="487.6" y="234.8" width="423.6" height="62.3" rx="19" ry="19" fill="#fff" stroke="#ff1a00" stroke-width="5.6"/></svg>
<span class="t" style="top:247.14px;font-size:31.5px;color:#ff1a00;-webkit-text-stroke:0.45px #ff1a00;left:500.90px;transform:scaleX(1.0305);">Keywords and their metrics</span>
</body></html>
